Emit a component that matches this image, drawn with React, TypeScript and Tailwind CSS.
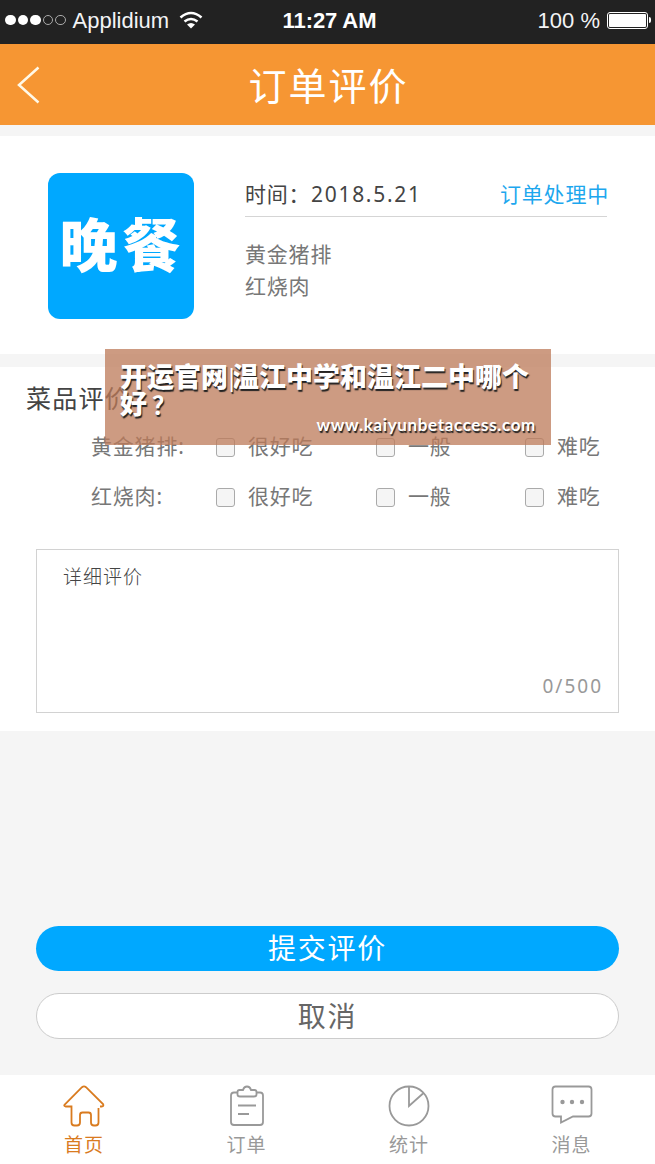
import type { ReactNode } from 'react'

const dishes = ['黄金猪排', '红烧肉']

const tabs = [
  {
    label: '首页',
    active: true,
    icon: (
      <path d="M35.5 23v14.500q0 3-3 3H31q-3 0-3-3v-7.500q0-2.500-2.500-2.500h-6Q17 27.500 17 30v7.500q0 3-3 3h-2.500q-3 0-3-3V21.500H2.500q-2-.5-.8-2L19 2.200q2-1.700 4 0L40 19q1 2-1 2.500h-2" />
    ),
  },
  {
    label: '订单',
    active: false,
    icon: (
      <>
        <path d="M11 7.500H8q-3 0-3 3V37q0 3 3 3h26q3 0 3-3V10.500q0-3-3-3h-3" />
        <path d="M14 11.500q-2.500 0-2.500-2V7q0-2 2-2H17q1-3.500 4-3.500T25 5h3.500q2 0 2 2v2.500q0 2-2.500 2zM12 20.500h18M12 29h11" />
      </>
    ),
  },
  {
    label: '统计',
    active: false,
    icon: (
      <>
        <circle cx="21" cy="21" r="19.500" />
        <path d="M21 1.500V21L35 8.500" />
      </>
    ),
  },
  {
    label: '消息',
    active: false,
    icon: (
      <>
        <path d="M4.500 1.500h33q3 0 3 3v24q0 3-3 3H22l-12 6v-6H4.500q-3 0-3-3v-24q0-3 3-3z" />
        <g fill="currentColor" stroke="none">
          <circle cx="11.500" cy="17" r="2.200" />
          <circle cx="21" cy="17" r="2.200" />
          <circle cx="31" cy="17" r="2.200" />
        </g>
      </>
    ),
  },
]

function StatusBar() {
  return (
    <div className="grid h-11 grid-cols-[1fr_auto_1fr] items-center bg-[#222] pr-1 pb-1 pl-[5px] font-['Liberation_Sans',Arial,sans-serif] text-[22px] text-white">
      <div className="flex items-center">
        <div className="flex gap-[2px]">
          <i className="size-[10.5px] rounded-full bg-white" />
          <i className="size-[10.5px] rounded-full bg-white" />
          <i className="size-[10.5px] rounded-full bg-white" />
          <i className="size-[10.5px] rounded-full border border-[#aaa]" />
          <i className="size-[10.5px] rounded-full border border-[#aaa]" />
        </div>
        <span className="ml-[7px] text-gray-100">Applidium</span>
        <svg className="ml-[10px] h-[18px] w-[24px]" viewBox="0 0 24 18" fill="none" stroke="white" strokeWidth="2.600">
          <path d="M1.500 6.500Q12-2.500 22.500 6.500" />
          <path d="M5.500 10.500q6.500-5 13 0" />
          <path d="M8 13.500q4-3.200 8 0l-4 4z" fill="white" stroke="none" />
        </svg>
      </div>
      <span className="pl-[3px] text-[22px] font-bold tracking-[-0.1px]">11:27 AM</span>
      <div className="flex items-center justify-end">
        <span className="text-gray-100">100 %</span>
        <div className="ml-[7px] h-[17px] w-[41px] rounded-[3px] border border-white p-px">
          <div className="h-full rounded-[1px] bg-white" />
        </div>
        <i className="ml-px h-[6px] w-[2px] rounded-r bg-white" />
      </div>
    </div>
  )
}

function CheckOption({ children }: { children: ReactNode }) {
  return (
    <label className="flex items-center gap-[13px]">
      <i className="size-[19px] rounded-[3px] border border-[#aaa] bg-[#f5f5f5]" />
      <span>{children}</span>
    </label>
  )
}

function Banner() {
  return (
    <div className="absolute top-[349px] left-[105px] flex h-24 w-[446px] flex-col bg-[#bc7a58]/75 px-[15px] pt-[14px] text-white [text-shadow:1px_2px_1px_#222]">
      <div className="text-[27px] leading-[27px] font-black">
        <div className="flex whitespace-nowrap">
          <span>开运官网</span>
          <span className="w-[4px] -translate-x-[3px] text-[24px] font-normal">|</span>
          <span>温江中学和温江二中哪个</span>
        </div>
        <div>好<span className="ml-[5px] text-[24px] font-bold">？</span></div>
      </div>
      <div className="mt-[-5px] self-end font-[Lato,sans-serif] text-[17px] leading-[24px] font-bold tracking-[0.65px]">
        www.kaiyunbetaccess.com
      </div>
    </div>
  )
}

export default function App() {
  return (
    <div className="relative flex h-[1164px] w-[655px] flex-col overflow-hidden bg-[#f5f5f5] font-['Noto_Sans','Noto_Sans_CJK_SC',sans-serif] font-normal text-[#666]">
      <StatusBar />
      <header className="grid h-[81px] grid-cols-[60px_1fr_60px] items-center bg-[#f69633] text-white">
        <svg className="ml-[17px] h-[38px] w-[23px]" viewBox="0 0 23 38" fill="none" stroke="#fff9e8" strokeWidth="2.500">
          <path d="M21.500 1.500 2 19l19.500 17.500" />
        </svg>
        <h1 className="pl-[2px] text-center text-[38px] leading-[60px] font-normal tracking-[2px]">订单评价</h1>
      </header>

      <section className="mt-[11px] flex h-[218px] bg-white pt-[37px] pl-12">
        <div className="flex size-[146px] items-center justify-center rounded-[12px] bg-[#00a8ff] pb-[3px] pl-[3px] text-[58px] font-black tracking-[5px] text-white">
          <span>晚餐</span>
        </div>
        <div className="ml-[51px] w-[362px]">
          <div className="flex h-[44px] items-center justify-between border-b border-[#d5d5d5] text-[21px] tracking-[0.8px]">
            <span className="flex whitespace-nowrap text-[#444]">
              <span className="w-[66px]">时间：</span>
              <span className="tracking-[1.7px]">2018.5.21</span>
            </span>
            <span className="-mr-[2px] text-[#1da7ee]">订单处理中</span>
          </div>
          <div className="mt-[21px] text-[21px] leading-8 tracking-[0.8px] text-[#777]">
            {dishes.map((dish) => (
              <div key={dish}>{dish}</div>
            ))}
          </div>
        </div>
      </section>

      <section className="mt-[13px] h-[364px] bg-white px-[36px] pt-[12px]">
        <h2 className="-ml-[10px] text-[25px] leading-[38px] font-normal tracking-[1.2px] text-[#444]">菜品评价</h2>
        <div className="mt-[5px] ml-[55px] text-[21px] tracking-[0.8px] text-[#777]">
          {dishes.map((dish) => (
            <div key={dish} className="grid h-[50px] grid-cols-[125px_160px_149px_1fr] items-center">
              <span>{dish}:</span>
              <CheckOption>很好吃</CheckOption>
              <CheckOption>一般</CheckOption>
              <CheckOption>难吃</CheckOption>
            </div>
          ))}
        </div>
        <div className="mt-[27px] flex h-[164px] w-[583px] flex-col justify-between border border-[#d2d2d2] pt-[12px] pr-[15px] pb-[12px] pl-[26px]">
          <span className="text-[19px] leading-[30px] font-light tracking-[1px] text-[#444]">详细评价</span>
          <span className="self-end text-[19px] leading-[28px] tracking-[2px] text-[#999]">0/500</span>
        </div>
      </section>

      <div className="mt-[195px] flex flex-col gap-[22px] px-[36px] text-[28px] tracking-[1.7px]">
        <button className="h-[45px] w-[583px] rounded-full bg-[#00a8ff] leading-[45px] text-white">提交评价</button>
        <button className="h-[46px] w-[583px] rounded-full border border-[#ccc] bg-white leading-[44px]">取消</button>
      </div>

      <nav className="mt-[36px] flex h-[89px] gap-[78.500px] bg-white pt-[10px] pl-[42px]">
        {tabs.map((tab) => (
          <div
            key={tab.label}
            className={tab.active ? 'flex w-[84px] flex-col items-center text-[#d97b1f]' : 'flex w-[84px] flex-col items-center text-[#999]'}
          >
            <svg className="size-[42px]" viewBox="0 0 42 42" fill="none" stroke="currentColor" strokeWidth="1.800">
              {tab.icon}
            </svg>
            <span className="mt-[4px] text-[19px] leading-[28px] tracking-[1px]">{tab.label}</span>
          </div>
        ))}
      </nav>
      <Banner />
    </div>
  )
}
